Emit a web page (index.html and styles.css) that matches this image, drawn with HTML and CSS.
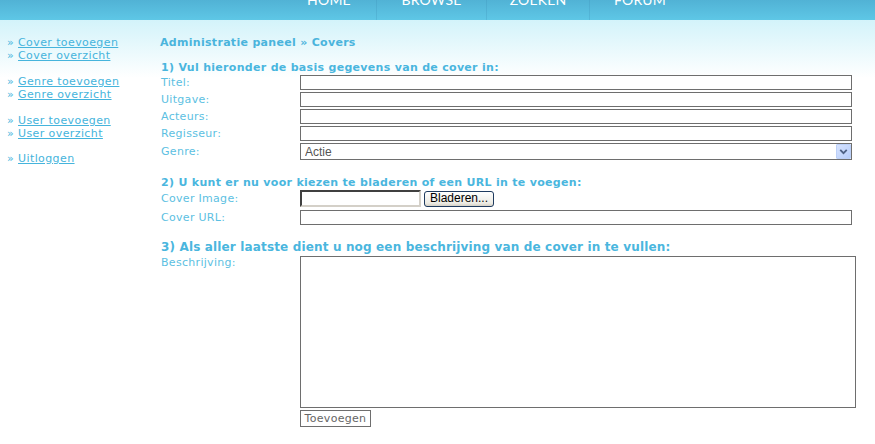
FILE: index.html
```html
<!DOCTYPE html>
<html lang="nl">
<head>
<meta charset="utf-8">
<title>Administratie paneel - Covers</title>
<link rel="stylesheet" href="styles.css">
</head>
<body>
<header class="header">
  <nav class="nav">
    <a class="nav-item nav-home" href="#">HOME</a>
    <a class="nav-item nav-browse" href="#">BROWSE</a>
    <a class="nav-item nav-zoeken" href="#">ZOEKEN</a>
    <a class="nav-item nav-forum" href="#">FORUM</a>
  </nav>
</header>
<div class="page">
  <aside class="sidebar">
    <ul class="link-group">
      <li>» <a href="#">Cover toevoegen</a></li>
      <li>» <a href="#">Cover overzicht</a></li>
    </ul>
    <ul class="link-group">
      <li>» <a href="#">Genre toevoegen</a></li>
      <li>» <a href="#">Genre overzicht</a></li>
    </ul>
    <ul class="link-group">
      <li>» <a href="#">User toevoegen</a></li>
      <li>» <a href="#">User overzicht</a></li>
    </ul>
    <ul class="link-group">
      <li>» <a href="#">Uitloggen</a></li>
    </ul>
  </aside>
  <main class="main">
    <h1 class="title">Administratie paneel » Covers</h1>
    <form class="cover-form">
      <h2 class="section-title first">1) Vul hieronder de basis gegevens van de cover in:</h2>
      <div class="row"><label class="label">Titel:</label><input class="text-input" type="text"></div>
      <div class="row"><label class="label">Uitgave:</label><input class="text-input" type="text"></div>
      <div class="row"><label class="label">Acteurs:</label><input class="text-input" type="text"></div>
      <div class="row"><label class="label">Regisseur:</label><input class="text-input" type="text"></div>
      <div class="row row-select"><label class="label">Genre:</label>
        <div class="select-wrap">
          <select class="select"><option>Actie</option></select>
          <span class="select-arrow"><svg width="16" height="16" viewBox="0 0 16 16"><path d="M4 6 L8 10 L12 6" fill="none" stroke="#4d6185" stroke-width="2.2"/></svg></span>
        </div>
      </div>

      <h2 class="section-title">2) U kunt er nu voor kiezen te bladeren of een URL in te voegen:</h2>
      <div class="row row-file"><label class="label">Cover Image:</label>
        <div class="file-wrap"><input class="file-box" type="text" readonly><button class="browse-btn" type="button">Bladeren...</button></div>
      </div>
      <div class="row row-url"><label class="label">Cover URL:</label><input class="text-input" type="text"></div>

      <h2 class="section-title big">3) Als aller laatste dient u nog een beschrijving van de cover in te vullen:</h2>
      <div class="row row-area"><label class="label">Beschrijving:</label><textarea class="textarea"></textarea></div>
      <div class="row row-submit"><span></span><button class="submit-btn" type="submit">Toevoegen</button></div>
    </form>
  </main>
</div>
</body>
</html>
```
FILE: styles.css
```css
html, body {
  margin: 0;
  padding: 0;
  background: #ffffff;
}
body {
  font-family: "DejaVu Sans", Verdana, sans-serif;
  font-size: 11px;
  line-height: 13px;
  color: #4ab6de;
  letter-spacing: 0.3px;
}

.header {
  height: 20px;
  overflow: hidden;
  background: linear-gradient(#51b2d5, #5ec7e6);
}
.nav {
  display: flex;
  margin-left: 282px;
  height: 20px;
}
.nav-item {
  display: block;
  text-align: center;
  color: #ffffff;
  text-decoration: none;
  font-family: Lato, "DejaVu Sans", sans-serif;
  font-size: 14px;
  line-height: 14px;
  margin-top: -7px;
  height: 27px;
  letter-spacing: 0.2px;
}
.nav-item + .nav-item {
  border-left: 1px solid rgba(60, 140, 180, 0.25);
}
.nav-home { width: 94px; }
.nav-browse { width: 109px; }
.nav-zoeken { width: 102px; }
.nav-forum { width: 100px; }

.page {
  display: flex;
  background: linear-gradient(#d3f3fa 0px, #ffffff 58px) no-repeat;
  min-height: 424px;
}

.sidebar {
  width: 152px;
  padding: 16px 0 0 7px;
  flex: none;
}
.link-group {
  list-style: none;
  margin: 0 0 13px 0;
  padding: 0;
}
.link-group:nth-child(3) { margin-bottom: 12px; }
.link-group li {
  line-height: 13px;
  color: #4ab6de;
  letter-spacing: 0.4px;
}
.link-group a {
  color: #45b4dc;
  text-decoration: underline;
}

.main {
  padding: 16px 0 0 1px;
}
.title {
  margin: 0;
  font-size: 11px;
  line-height: 13px;
  font-weight: bold;
  color: #4ab4dc;
}
.cover-form {
  margin: 0;
}
.section-title {
  margin: 16px 0 1px 0;
  font-size: 11px;
  line-height: 13px;
  font-weight: bold;
  color: #4ab6de;
  padding-left: 1px;
}
.section-title.first {
  margin-top: 12px;
}
.section-title.big {
  font-size: 12px;
  letter-spacing: 0.15px;
  margin-bottom: 2px;
}

.row {
  display: grid;
  grid-template-columns: 140px auto;
  align-items: center;
  margin-bottom: 2px;
}
.label {
  color: #5cbfe2;
  padding-left: 1px;
}
.text-input {
  box-sizing: border-box;
  width: 552px;
  height: 15px;
  margin: 0;
  padding: 0 2px;
  border: 1px solid #6e6e6e;
  background: #ffffff;
  font-family: "Liberation Sans", Arial, sans-serif;
  font-size: 12px;
  outline: none;
}

.select-wrap {
  position: relative;
  width: 552px;
  height: 17px;
}
.select {
  box-sizing: border-box;
  width: 552px;
  height: 17px;
  margin: 0;
  padding: 0 4px;
  border: 1px solid #6e6e6e;
  border-radius: 0;
  background: #ffffff;
  color: #555555;
  font-family: "Liberation Sans", Arial, sans-serif;
  font-size: 12px;
  letter-spacing: 0;
  -webkit-appearance: none;
  appearance: none;
  outline: none;
}
.select-arrow {
  position: absolute;
  right: 1px;
  top: 1px;
  width: 15px;
  height: 15px;
  background: linear-gradient(135deg, #d6e3ff, #b7cdfa);
  border: 1px solid #bcd0f8;
  box-sizing: border-box;
  display: flex;
  align-items: center;
  justify-content: center;
  border-radius: 1px;
}
.select-arrow svg {
  width: 13px;
  height: 13px;
}

.row-file {
  margin-bottom: 3px;
}
.file-wrap {
  display: flex;
  align-items: center;
  height: 17px;
}
.file-box {
  box-sizing: border-box;
  width: 121px;
  height: 17px;
  margin: 0;
  padding: 0;
  border: 2px solid;
  border-color: #404040 #d4d0c8 #d4d0c8 #404040;
  background: #ffffff;
  outline: none;
}
.browse-btn {
  box-sizing: border-box;
  width: 70px;
  height: 16px;
  margin: 0 0 0 3px;
  padding: 0;
  border: 1px solid #1f3b5f;
  border-radius: 3px;
  background: linear-gradient(#ffffff, #ecebe4 80%, #d6d0c5);
  color: #000000;
  font-family: "Liberation Sans", Arial, sans-serif;
  font-size: 12px;
  line-height: 13px;
  letter-spacing: 0;
}

.row-area {
  align-items: start;
}
.row-area .label {
  line-height: 14px;
}
.textarea {
  box-sizing: border-box;
  width: 556px;
  height: 152px;
  margin: 0;
  padding: 2px;
  border: 1px solid #6e6e6e;
  resize: none;
  outline: none;
  background: #ffffff;
}
.submit-btn {
  box-sizing: border-box;
  justify-self: start;
  width: 71px;
  height: 17px;
  margin: 0;
  padding: 0;
  border: 1px solid #6e6e6e;
  background: #ffffff;
  color: #666666;
  font-family: "DejaVu Sans", Verdana, sans-serif;
  font-size: 11px;
  line-height: 13px;
  letter-spacing: 0.3px;
}
```
